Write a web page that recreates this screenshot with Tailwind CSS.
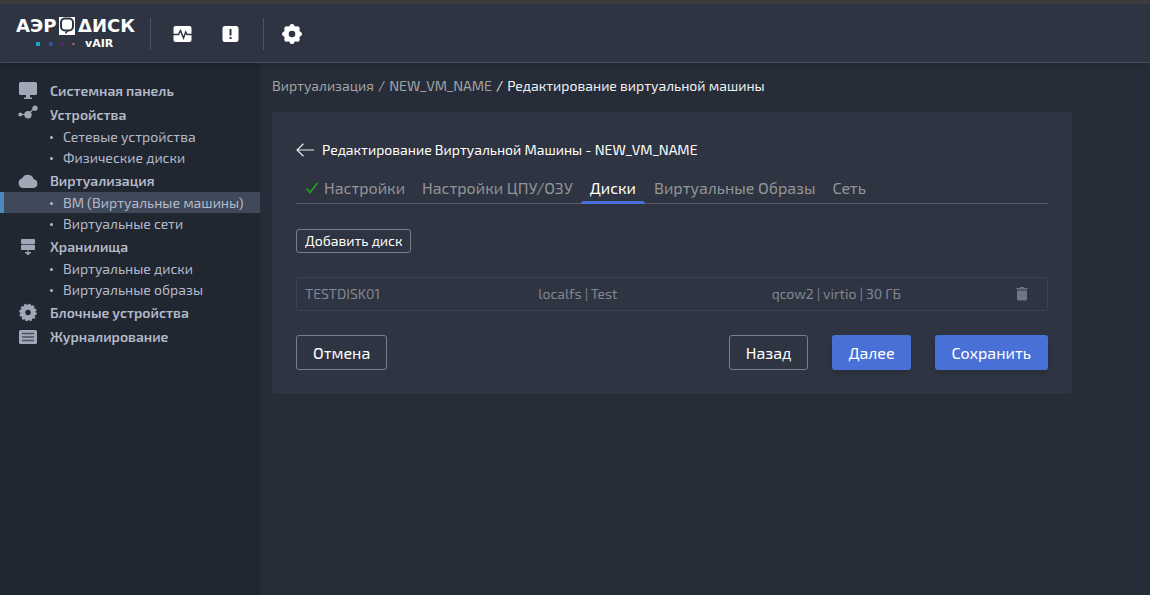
<!DOCTYPE html>
<html lang="ru">
<head>
<meta charset="utf-8">
<meta name="viewport" content="width=device-width, initial-scale=1">
<title>Аэродиск vAIR</title>
<script src="https://cdn.jsdelivr.net/npm/@tailwindcss/browser@4"></script>
</head>
<body class="flex min-h-screen flex-col bg-[#272d38] font-['Exo_2','Noto_Sans',sans-serif] text-sm text-white">
<header class="relative flex h-[63px] items-center border-t-4 border-b border-t-[#3c3c3c] border-b-[#454e63] bg-[#2e3442] pt-0.5 shadow-md">
  <a href="#" class="ml-4 block w-[119px] font-['DejaVu_Sans',sans-serif] font-bold">
    <span class="flex h-5 items-center justify-between text-lg leading-5">
      <span>АЭР</span>
      <svg class="h-[18px] w-4" viewBox="0 0 16 18" aria-hidden="true"><rect width="16" height="18" fill="#fff"/><rect x="2" y="1.500" width="12" height="12" rx="4" fill="none" stroke="#2e3442" stroke-width="2"/><rect x="5" y="4.500" width="6" height="6" fill="#fff"/><path d="M9 13 6.500 16.500" stroke="#2e3442" stroke-width="1.400"/></svg>
      <span>ΔИСК</span>
    </span>
    <span class="flex h-4 items-center pl-5 text-[11px] leading-4">
      <svg class="h-1 w-[39px]" viewBox="0 0 39 4" aria-hidden="true"><rect width="4" height="4" fill="#1fa3c4"/><rect x="13" y=".3" width="3.5" height="3.5" fill="#245fa8"/><rect x="25" y=".6" width="3" height="3" fill="#6a1b83"/><rect x="36.500" y="1" width="2" height="2" fill="#d8605f"/></svg>
      <span class="ml-2.5">vAIR</span>
    </span>
  </a>
  <div class="ml-[15px] h-8 w-px bg-[#4a556a]"></div>
  <button type="button" aria-label="Мониторинг" class="ml-[22px]"><svg class="block size-5" viewBox="0 0 20 20"><rect x=".5" y="2" width="18" height="16" rx="2" fill="#fff"/><path d="M0 10.500h5.500l2-4 3 7.500 2.200-6 1.300 2.500H20" fill="none" stroke="#2e3442" stroke-width="1.500"/></svg></button>
  <button type="button" aria-label="События" class="ml-7"><svg class="block size-5" viewBox="0 0 20 20"><rect x="1.500" y="2" width="16" height="16" rx="2.500" fill="#fff"/><path d="M9.500 5v6.500M9.500 13v2" stroke="#2e3442" stroke-width="2"/></svg></button>
  <div class="ml-[22px] h-8 w-px bg-[#4a556a]"></div>
  <button type="button" aria-label="Параметры" class="ml-[18px]"><svg class="block size-5" viewBox="0 0 20 20" fill="#fff"><circle cx="10" cy="10" r="5.800" fill="none" stroke="#fff" stroke-width="5"/><circle cx="10" cy="2.600" r="2.500"/><circle cx="10" cy="17.400" r="2.500"/><circle cx="2.600" cy="10" r="2.500"/><circle cx="17.400" cy="10" r="2.500"/><circle cx="4.800" cy="4.800" r="2.500"/><circle cx="15.200" cy="4.800" r="2.500"/><circle cx="4.800" cy="15.200" r="2.500"/><circle cx="15.200" cy="15.200" r="2.500"/></svg></button>
</header>
<div class="flex flex-1">
  <nav class="w-[260px] shrink-0 bg-[#212730] pt-[15px] text-[#b4bacb]" aria-label="Главное меню">
    <a href="#" class="flex h-6 items-center gap-3 pt-0.5 pl-[18px] font-semibold"><svg class="size-5" viewBox="0 0 20 20" fill="#a1a7b6"><path d="M2.500 1h15A1.500 1.500 0 0 1 19 2.500v10a1.500 1.500 0 0 1-1.500 1.500H12v2.500h2V18H6v-1.500h2V14H2.500A1.500 1.500 0 0 1 1 12.500v-10A1.500 1.500 0 0 1 2.500 1Z"/></svg>Системная панель</a>
    <a href="#" class="flex h-6 items-center gap-3 pt-0.5 pl-[18px] font-semibold"><svg class="size-5" viewBox="0 0 20 20" fill="#a1a7b6"><path d="M2 9.500h8l6.500-6.500" fill="none" stroke="#a1a7b6" stroke-width="1.200"/><circle cx="2.300" cy="9.500" r="2"/><circle cx="10" cy="9.700" r="3.700"/><circle cx="17" cy="3.200" r="2.600"/></svg>Устройства</a>
    <ul>
      <li><a href="#" class="flex h-[21px] items-center gap-2.5 pt-px pl-[50px]"><span class="size-[3px] rounded-full bg-current"></span>Сетевые устройства</a></li>
      <li><a href="#" class="flex h-[21px] items-center gap-2.5 pt-px pl-[50px]"><span class="size-[3px] rounded-full bg-current"></span>Физические диски</a></li>
    </ul>
    <a href="#" class="flex h-6 items-center gap-3 pt-0.5 pl-[18px] font-semibold"><svg class="size-5" viewBox="0 0 20 20" fill="#a1a7b6"><path d="M5.500 17A5 5 0 0 1 4.200 7.200a6.300 6.300 0 0 1 11.600 1.100A4.400 4.400 0 0 1 15.500 17Z"/></svg>Виртуализация</a>
    <ul>
      <li><a href="#" aria-current="page" class="flex h-[21px] items-center gap-2.5 border-l-4 border-[#4a88bd] bg-[#404959] pt-px pl-[46px]"><span class="size-[3px] rounded-full bg-current"></span>ВМ (Виртуальные машины)</a></li>
      <li><a href="#" class="flex h-[21px] items-center gap-2.5 pt-px pl-[50px]"><span class="size-[3px] rounded-full bg-current"></span>Виртуальные сети</a></li>
    </ul>
    <a href="#" class="flex h-6 items-center gap-3 pt-0.5 pl-[18px] font-semibold"><svg class="size-5" viewBox="0 0 20 20" fill="#a1a7b6"><rect x="3" y="2" width="14" height="5" rx="1"/><rect x="3" y="8" width="14" height="5" rx="1"/><path d="M3.500 7h13v1h-13Z" opacity=".35"/><path d="M9.500 13h1v2H13v1.500h-2V18H9v-1.500H7V15h2.500Z"/></svg>Хранилища</a>
    <ul>
      <li><a href="#" class="flex h-[21px] items-center gap-2.5 pt-px pl-[50px]"><span class="size-[3px] rounded-full bg-current"></span>Виртуальные диски</a></li>
      <li><a href="#" class="flex h-[21px] items-center gap-2.5 pt-px pl-[50px]"><span class="size-[3px] rounded-full bg-current"></span>Виртуальные образы</a></li>
    </ul>
    <a href="#" class="flex h-6 items-center gap-3 pt-0.5 pl-[18px] font-semibold"><svg class="size-5" viewBox="0 0 20 20" fill="none" stroke="#a1a7b6"><circle cx="10" cy="9.500" r="5.200" stroke-width="5"/><circle cx="10" cy="9.500" r="8" stroke-width="1.600" stroke-dasharray="2.500 1.690"/></svg>Блочные устройства</a>
    <a href="#" class="flex h-6 items-center gap-3 pt-0.5 pl-[18px] font-semibold"><svg class="size-5" viewBox="0 0 20 20"><rect x="1" y="3" width="18" height="14" rx="1.500" fill="#a1a7b6"/><path d="M4 6.500h12M4 10h12M4 13.500h12" stroke="#4a5160" stroke-width="1.300"/></svg>Журналирование</a>
  </nav>
  <main class="min-w-0 flex-1 px-3 pt-3">
    <nav class="flex h-[22px] items-center gap-1 text-[#a3a4a6]" aria-label="Навигация">
      <a href="#">Виртуализация</a><span>/</span><a href="#">NEW_VM_NAME</a><span class="text-[#e8e9eb]">/</span><span class="text-[#f0f1f3]">Редактирование виртуальной машины</span>
    </nav>
    <section class="mt-[15px] max-w-[800px] rounded bg-[#2e3441] p-6">
      <h1 class="flex h-7 items-center gap-2">
        <a href="#" aria-label="Назад к списку"><svg class="block h-3.5 w-[18px]" viewBox="0 0 18 14" fill="none" stroke="#e6e7ea" stroke-width="1.200"><path d="M18 7H1M7.500.7 1 7l6.500 6.300"/></svg></a>
        Редактирование Виртуальной Машины - NEW_VM_NAME
      </h1>
      <div role="tablist" class="mt-2.5 flex h-[30px] border-b border-[#575b61] text-base text-[#939497]">
        <button type="button" role="tab" class="flex items-center gap-[5px] px-[9px] pb-0.5"><svg class="h-3 w-3.5" viewBox="0 0 14 12" fill="none" stroke="#1fa51f" stroke-width="1.600"><path d="m1.500 6.500 3.500 4L12.500 1"/></svg>Настройки</button>
        <button type="button" role="tab" class="px-2 pb-0.5">Настройки ЦПУ/ОЗУ</button>
        <button type="button" role="tab" aria-selected="true" class="relative px-[9px] pb-0.5 text-white">Диски<span class="absolute inset-x-0 -bottom-px h-[3px] rounded-t-sm bg-[#4870d6]"></span></button>
        <button type="button" role="tab" class="px-[9px] pb-0.5">Виртуальные Образы</button>
        <button type="button" role="tab" class="px-2 pb-0.5">Сеть</button>
      </div>
      <button type="button" class="mt-[25px] block h-6 rounded-[3px] border border-[#7b7f85] px-2 leading-[22px]">Добавить диск</button>
      <div class="mt-6 flex h-[34px] items-center rounded-[3px] border border-[#364350] px-2 text-[#828792]">
        <span class="flex-1">TESTDISK01</span>
        <span class="flex-1">localfs | Test</span>
        <span class="flex-1">qcow2 | virtio | 30 ГБ</span>
        <button type="button" aria-label="Удалить диск" class="flex w-[34px] justify-center"><svg class="block h-4 w-4" viewBox="0 0 16 16" fill="#707582"><path d="M2.500 2h3l1-1h3l1 1h3v1.500h-11ZM3 4.500h10V13a1.500 1.500 0 0 1-1.500 1.500h-7A1.500 1.500 0 0 1 3 13Z"/></svg></button>
      </div>
      <div class="mt-6 flex gap-6 text-base">
        <button type="button" class="mr-auto h-[35px] rounded-[3px] border border-[#7b7f85] px-4">Отмена</button>
        <button type="button" class="h-[35px] rounded-[3px] border border-[#7b7f85] px-4">Назад</button>
        <button type="button" class="h-[35px] rounded-[3px] bg-[#4870d6] px-4 shadow-md">Далее</button>
        <button type="button" class="h-[35px] rounded-[3px] bg-[#4870d6] px-[17px] shadow-md">Сохранить</button>
      </div>
    </section>
  </main>
</div>
</body>
</html>
